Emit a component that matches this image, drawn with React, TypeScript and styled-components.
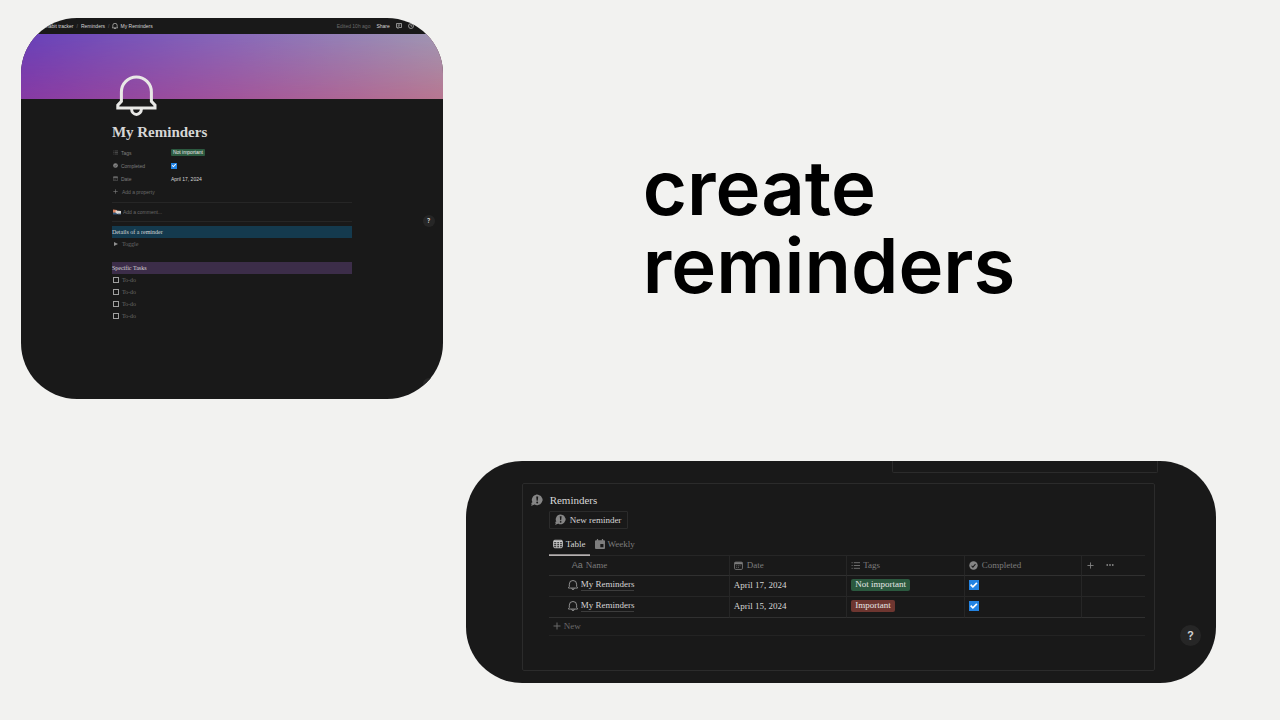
import React from "react";
import styled, { createGlobalStyle } from "styled-components";

const sans = `Inter, "Liberation Sans", sans-serif`;
const smallSans = `"Liberation Sans", Inter, sans-serif`;
const serif = `"Liberation Serif", "DejaVu Serif", serif`;

const Global = createGlobalStyle`
  *, *::before, *::after { box-sizing: border-box; }
  body { margin: 0; background: #f2f2f0; }
  button { background: none; border: 0; padding: 0; margin: 0; font: inherit; color: inherit; cursor: pointer; }
  input { margin: 0; font: inherit; }
  a { color: inherit; text-decoration: none; }
  svg { display: block; flex: none; }
`;

const Page = styled.main`
  min-height: 100vh;
  padding: 18px 0 37px 21px;
  display: flex;
  flex-direction: column;
  justify-content: space-between;
  gap: 40px;
`;

const Hero = styled.section`
  display: flex;
  align-items: center;
`;

const Headline = styled.h1`
  margin: 0;
  padding: 34px 20px 0 0;
  margin-left: 200px;
  flex: 1;
  max-width: 440px;
  font: 600 76px/78px ${sans};
  color: #000;
`;

const Card = styled.article`
  position: relative;
  overflow: hidden;
  border-radius: 56px;
  background: #191919;
  color: #d6d6d6;
`;

const ReminderCard = styled(Card)`
  width: 33.5%;
  min-height: 381px;
  font: 5px/8px ${smallSans};
`;

const TopBar = styled.header`
  height: 16px;
  padding: 0 29px 0 25px;
  display: flex;
  align-items: center;
  justify-content: space-between;
`;

const Crumbs = styled.nav`
  display: flex;
  align-items: center;
  gap: 3px;
  white-space: nowrap;
`;

const Crumb = styled.a`
  display: flex;
  align-items: center;
  gap: 2px;
`;

const Slash = styled.span`
  color: #6a6a6a;
`;

const Actions = styled.div`
  display: flex;
  align-items: center;
  gap: 6px;
`;

const Edited = styled.span`
  color: #6a6a6a;
`;

const Share = styled.button`
  font-weight: 500;
`;

const Cover = styled.div`
  position: relative;
  height: 65px;
  background: linear-gradient(90deg, #873aa4, #a2559b 50%, #b87791);
  &::before {
    content: "";
    position: absolute;
    inset: 0;
    background: linear-gradient(90deg, #6741b9, #8768b9 50%, #9f97b3);
    mask-image: linear-gradient(180deg, #000, transparent);
  }
`;

const Doc = styled.div`
  position: relative;
  width: 58%;
  max-width: 240px;
  margin: -24px auto 0;
`;

const BigBell = styled.div`
  padding-left: 4px;
`;

const Title = styled.h2`
  margin: 7px 0 5px;
  font: 700 15px/18px ${serif};
`;

const Properties = styled.div`
  padding-bottom: 4px;
`;

const Property = styled.div`
  height: 13px;
  display: grid;
  grid-template-columns: 59px 1fr;
  align-items: center;
`;

const PropertyName = styled.label`
  display: flex;
  align-items: center;
  gap: 3px;
  padding-left: 1px;
  color: #7d7d7d;
`;

const AddProperty = styled.button`
  height: 13px;
  padding-left: 1px;
  display: flex;
  align-items: center;
  gap: 4px;
  color: #6a6a6a;
`;

const CommentRow = styled.div`
  height: 20px;
  padding-left: 1px;
  border: solid #262626;
  border-width: 1px 0;
  display: flex;
  align-items: center;
  gap: 2px;
`;

const CommentInput = styled.input`
  flex: 1;
  min-width: 0;
  height: 10px;
  padding: 0;
  border: 0;
  outline: 0;
  background: none;
  color: #d6d6d6;
  &::placeholder { color: #6a6a6a; opacity: 1; }
`;

const Blocks = styled.div`
  padding-top: 4px;
  font: 6px/12px ${serif};
`;

const Highlight = styled.h3<{ $tone: string }>`
  margin: 0;
  height: 12px;
  font: inherit;
  background: ${(p) => p.$tone};
`;

const ToggleLine = styled.button`
  height: 12px;
  margin-bottom: 12px;
  padding-left: 2px;
  display: flex;
  align-items: center;
  gap: 4px;
  color: #6a6a6a;
`;

const Todo = styled.label`
  height: 12px;
  padding-left: 1px;
  display: flex;
  align-items: center;
  gap: 3px;
  color: #6a6a6a;
`;

const Check = styled.input.attrs({ type: "checkbox" })<{ $size: number }>`
  appearance: none;
  display: block;
  flex: none;
  width: ${(p) => p.$size}px;
  height: ${(p) => p.$size}px;
  border: 1px solid #a0a0a0;
  &:checked { border: 0; background: #2383e2; }
  &:checked::before {
    content: "";
    display: block;
    height: 100%;
    background: #fff;
    clip-path: polygon(14% 52%, 26% 41%, 42% 57%, 76% 22%, 88% 34%, 42% 80%);
  }
`;

const Pill = styled.span<{ $tone: string; $large?: boolean }>`
  display: inline-block;
  justify-self: start;
  height: ${(p) => (p.$large ? 12 : 7)}px;
  line-height: ${(p) => (p.$large ? 11 : 7)}px;
  padding: 0 ${(p) => (p.$large ? 4 : 2)}px;
  border-radius: ${(p) => (p.$large ? 2 : 1)}px;
  background: ${(p) => p.$tone};
  color: #e6e6e6;
  vertical-align: middle;
`;

const Help = styled.button<{ $size: number; $right: number; $bottom: number }>`
  position: absolute;
  right: ${(p) => p.$right}px;
  bottom: ${(p) => p.$bottom}px;
  width: ${(p) => p.$size}px;
  height: ${(p) => p.$size}px;
  border-radius: 50%;
  background: #262626;
  color: #d0d0d0;
  font: 600 ${(p) => (p.$size > 15 ? 12 : 6)}px/1 ${sans};
`;

const TableCard = styled(Card)`
  width: 59.6%;
  margin-left: auto;
  margin-right: 64px;
  padding-bottom: 12px;
  font: 9px/12px ${serif};
`;

const FrameEdge = styled.div`
  width: 35.4%;
  height: 12px;
  margin: 0 58px 10px auto;
  border: 1px solid #2b2b2b;
  border-top: 0;
  border-radius: 0 0 2px 2px;
`;

const Panel = styled.section`
  margin: 0 61px 0 56px;
  min-height: 188px;
  padding: 8px 9px 34px 8px;
  border: 1px solid #2b2b2b;
  border-radius: 2px;
`;

const PanelTitle = styled.h2`
  margin: 0;
  height: 16px;
  padding-bottom: 1px;
  display: flex;
  align-items: center;
  gap: 7px;
  font: 11px/14px ${serif};
`;

const PanelBody = styled.div`
  padding-left: 18px;
`;

const NewReminder = styled.button`
  height: 18px;
  margin-top: 3px;
  padding: 0 6px 1px 5px;
  display: flex;
  align-items: center;
  gap: 4px;
  border: 1px solid #2b2b2b;
  border-radius: 1px;
`;

const Tabs = styled.div`
  display: flex;
  gap: 1px;
  margin-top: 4px;
`;

const Tab = styled.button<{ $active?: boolean }>`
  height: 22px;
  padding: 0 4px 1px;
  display: flex;
  align-items: center;
  gap: 3px;
  color: ${(p) => (p.$active ? "#d6d6d6" : "#7d7d7d")};
  box-shadow: ${(p) => (p.$active ? "0 1px 0 #b5b0b0, inset 0 -1px 0 #8a8686" : "none")};
`;

const DataTable = styled.table`
  width: 100%;
  table-layout: fixed;
  border-spacing: 0;
  border-top: 1px solid #262626;
`;

const Head = styled.th<{ $indent?: boolean; $width?: string }>`
  width: ${(p) => p.$width ?? "auto"};
  height: 20px;
  padding: 0 0 1px ${(p) => (p.$indent ? 23 : 4)}px;
  border-bottom: 1px solid #303030;
  font-weight: 400;
  text-align: left;
  color: #7d7d7d;
  & + & { border-left: 1px solid #262626; }
`;

const Cell = styled.td<{ $indent?: boolean }>`
  height: 21px;
  padding: 0 0 2px ${(p) => (p.$indent ? 19 : 4)}px;
  border-bottom: 1px solid #262626;
  & + & { border-left: 1px solid #262626; }
  tr:last-child > & { border-bottom-color: #303030; }
`;

const Inline = styled.span<{ $gap?: number }>`
  display: flex;
  align-items: center;
  gap: ${(p) => p.$gap ?? 4}px;
`;

const AaMark = styled.span`
  font: 9px/12px ${smallSans};
`;

const HeadTools = styled.span`
  display: flex;
  align-items: center;
  gap: 12px;
  padding-left: 1px;
`;

const PageLink = styled.a`
  line-height: 11px;
  border-bottom: 1px solid #3c3c3c;
`;

const NewRow = styled.button`
  width: 100%;
  height: 18px;
  padding: 0 0 2px 4px;
  display: flex;
  align-items: center;
  gap: 3px;
  border-bottom: 1px solid #232323;
  color: #6a6a6a;
`;

const Bell = ({ size, stroke = 3, color = "#e8e8e6" }: { size: number; stroke?: number; color?: string }) => (
  <svg width={size} height={size} viewBox="0 0 41 41" fill="none" stroke={color} strokeWidth={stroke}>
    <path d="M1.8 33V30.2L5.4 26.4V17A15 15 0 0 1 35.4 17V26.4L39 30.2V33Z" />
    <path d="M15.6 34a4.9 5.4 0 0 0 9.8 0" />
  </svg>
);

const ListIcon = ({ size }: { size: number }) => (
  <svg width={size} height={size} viewBox="0 0 16 16" stroke="#7d7d7d" strokeWidth="1.5">
    <path d="M1 3h2M1 8h2M1 13h2M5 3h11M5 8h11M5 13h11" />
  </svg>
);

const CheckCircle = ({ size }: { size: number }) => (
  <svg width={size} height={size} viewBox="0 0 16 16">
    <circle cx="8" cy="8" r="7.5" fill="#858585" />
    <path d="M4.5 8.4l2.4 2.6 4.6-5.4" fill="none" stroke="#191919" strokeWidth="1.8" />
  </svg>
);

const CalendarIcon = ({ size }: { size: number }) => (
  <svg width={size} height={size} viewBox="0 0 16 16" fill="none" stroke="#7d7d7d">
    <rect x="1" y="2" width="14" height="13" rx="2" strokeWidth="1.5" />
    <path d="M1 4h14" strokeWidth="3.4" />
    <path d="M4 8.5h8M4 11.5h6" strokeWidth="1.4" strokeDasharray="1.6 1.4" />
  </svg>
);

const WeekIcon = () => (
  <svg width="10" height="10" viewBox="0 0 16 16" fill="#7d7d7d">
    <path d="M3 0h2v2h6V0h2v2h1.5q1.5 0 1.5 1.5v11q0 1.5-1.5 1.5h-13Q0 16 0 14.5v-11Q0 2 1.5 2H3z" />
    <path d="M8.5 8h5v5h-5z" fill="#191919" />
  </svg>
);

const GridIcon = () => (
  <svg width="10" height="10" viewBox="0 0 16 16" fill="none" stroke="#c8c8c8" strokeWidth="1.5">
    <rect x="1" y="2" width="14" height="12" rx="2" />
    <path d="M1 3.8h14" strokeWidth="2.4" />
    <path d="M1 7.5h14M1 10.8h14M6 3v11M10.5 3v11" />
  </svg>
);

const PlusIcon = ({ size, color }: { size: number; color: string }) => (
  <svg width={size} height={size} viewBox="0 0 8 8" stroke={color} strokeWidth="1">
    <path d="M4 .5v7M.5 4h7" />
  </svg>
);

const AlertBubble = ({ size }: { size: number }) => (
  <svg width={size} height={size} viewBox="0 0 24 24">
    <path
      d="M12 1c2 0 3 .6 4.5 1.3S20 3.600 21 6s2.300 3 2.300 5.500-.8 3-1.800 5-2.200 3.800-4.500 4.500-3 1.500-5 1.500-3-.6-4.500-1.300S4 18.500 3 16.500 1.500 13.500 1.500 11.500s1-3.500 2-5.500 2-3 4.200-3.700S10 1 12 1z"
      fill="#858585"
    />
    <circle cx="4" cy="19" r="3.2" fill="#858585" />
    <circle cx="1.8" cy="22.4" r="1.3" fill="#858585" />
    <path d="M10.400 5h4l-.9 8.500h-2.200z" fill="#191919" />
    <circle cx="12.4" cy="17" r="1.9" fill="#191919" />
  </svg>
);

const CommentIcon = () => (
  <svg width="6" height="6" viewBox="0 0 12 12" fill="none" stroke="#c0c0c0" strokeWidth="1.4">
    <path d="M1 1h10v8H6l-2.5 2V9H1zM3.5 4h5M3.5 6.3h3.5" />
  </svg>
);

const ClockIcon = () => (
  <svg width="6" height="6" viewBox="0 0 12 12" fill="none" stroke="#c0c0c0" strokeWidth="1.4">
    <circle cx="6" cy="6" r="5" />
    <path d="M6 3v3.3h2.5" />
  </svg>
);

const Avatar = () => (
  <svg width="8" height="6" viewBox="0 0 16 12">
    <path d="M0 1l8 1v5L0 8z" fill="#d9825f" />
    <path d="M5 3l11 1v6H5z" fill="#d8d4d0" />
    <path d="M0 7l7 1 1 3H0z" fill="#31567c" />
    <path d="M9 9h7v2H9z" fill="#4a6a8a" />
  </svg>
);

const Caret = () => (
  <svg width="4" height="4" viewBox="0 0 8 8" fill="#909090">
    <path d="M0 0l8 4-8 4z" />
  </svg>
);

const Dots = () => (
  <svg width="8" height="4" viewBox="0 0 16 8" fill="#858585">
    <circle cx="2.5" cy="4" r="1.8" />
    <circle cx="8" cy="4" r="1.8" />
    <circle cx="13.5" cy="4" r="1.8" />
  </svg>
);

const green = "#2b593f";
const red = "#6e3630";

const reminders = [
  { id: "a", date: "April 17, 2024", tag: "Not important", tone: green },
  { id: "b", date: "April 15, 2024", tag: "Important", tone: red },
];

export default function App() {
  return (
    <>
      <Global />
      <Page>
        <Hero>
          <ReminderCard>
            <TopBar>
              <Crumbs aria-label="Breadcrumb">
                <Crumb href="#tracker">habit tracker</Crumb>
                <Slash>/</Slash>
                <Crumb href="#reminders">Reminders</Crumb>
                <Slash>/</Slash>
                <Crumb href="#mine">
                  <Bell size={6} stroke={4} />
                  My Reminders
                </Crumb>
              </Crumbs>
              <Actions>
                <Edited>Edited 10h ago</Edited>
                <Share>Share</Share>
                <button aria-label="Comments"><CommentIcon /></button>
                <button aria-label="Updates"><ClockIcon /></button>
              </Actions>
            </TopBar>
            <Cover />
            <Doc>
              <BigBell><Bell size={41} /></BigBell>
              <Title>My Reminders</Title>
              <Properties>
                <Property>
                  <PropertyName as="span"><ListIcon size={5} />Tags</PropertyName>
                  <Pill $tone={green}>Not important</Pill>
                </Property>
                <Property>
                  <PropertyName htmlFor="completed"><CheckCircle size={5} />Completed</PropertyName>
                  <Check id="completed" $size={6} defaultChecked />
                </Property>
                <Property>
                  <PropertyName as="span"><CalendarIcon size={5} />Date</PropertyName>
                  <span>April 17, 2024</span>
                </Property>
                <AddProperty><PlusIcon size={5} color="#7d7d7d" />Add a property</AddProperty>
              </Properties>
              <CommentRow>
                <Avatar />
                <CommentInput aria-label="Comment" placeholder="Add a comment..." />
              </CommentRow>
              <Blocks>
                <Highlight $tone="#143a4e">Details of a reminder</Highlight>
                <ToggleLine><Caret />Toggle</ToggleLine>
                <Highlight $tone="#3c2d49">Specific Tasks</Highlight>
                {[1, 2, 3, 4].map((n) => (
                  <Todo key={n}><Check $size={6} />To-do</Todo>
                ))}
              </Blocks>
            </Doc>
            <Help $size={12} $right={8} $bottom={172} aria-label="Help">?</Help>
            <Help $size={12} $right={8} $bottom={9} aria-label="More" />
          </ReminderCard>
          <Headline>create reminders</Headline>
        </Hero>

        <TableCard>
          <FrameEdge />
          <Panel>
            <PanelTitle><AlertBubble size={12} />Reminders</PanelTitle>
            <PanelBody>
              <NewReminder><AlertBubble size={11} />New reminder</NewReminder>
              <Tabs role="tablist">
                <Tab role="tab" aria-selected="true" $active><GridIcon />Table</Tab>
                <Tab role="tab" aria-selected="false"><WeekIcon />Weekly</Tab>
              </Tabs>
              <DataTable>
                <thead>
                  <tr>
                    <Head $indent $width="30.2%"><Inline $gap={3}><AaMark>Aa</AaMark>Name</Inline></Head>
                    <Head $width="19.7%"><Inline><CalendarIcon size={9} />Date</Inline></Head>
                    <Head $width="19.7%"><Inline $gap={3}><ListIcon size={9} />Tags</Inline></Head>
                    <Head $width="19.7%"><Inline><CheckCircle size={9} />Completed</Inline></Head>
                    <Head>
                      <HeadTools>
                        <button aria-label="Add column"><PlusIcon size={7} color="#858585" /></button>
                        <button aria-label="Column options"><Dots /></button>
                      </HeadTools>
                    </Head>
                  </tr>
                </thead>
                <tbody>
                  {reminders.map((r) => (
                    <tr key={r.id}>
                      <Cell $indent>
                        <Inline $gap={3}><Bell size={10} color="#b8b8b8" /><PageLink href="#mine">My Reminders</PageLink></Inline>
                      </Cell>
                      <Cell>{r.date}</Cell>
                      <Cell><Pill $large $tone={r.tone}>{r.tag}</Pill></Cell>
                      <Cell><Check $size={10} defaultChecked aria-label={`Completed, ${r.date}`} /></Cell>
                      <Cell />
                    </tr>
                  ))}
                </tbody>
              </DataTable>
              <NewRow><PlusIcon size={8} color="#6a6a6a" />New</NewRow>
            </PanelBody>
          </Panel>
          <Help $size={21} $right={15} $bottom={37} aria-label="Help">?</Help>
        </TableCard>
      </Page>
    </>
  );
}
